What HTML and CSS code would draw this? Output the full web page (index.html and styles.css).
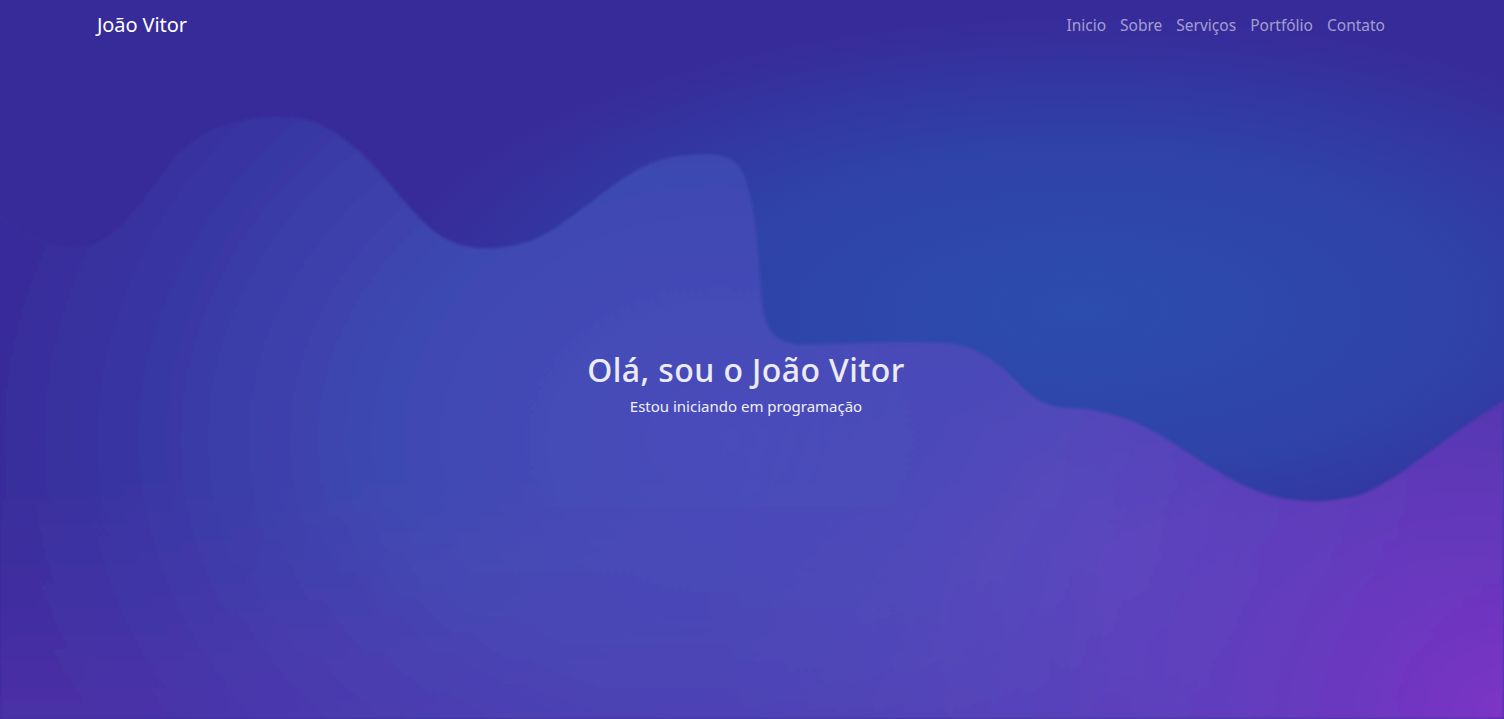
FILE: index.html
```html
<!DOCTYPE html>
<html lang="pt-BR">
<head>
<meta charset="utf-8">
<title>João Vitor</title>
<link rel="stylesheet" href="styles.css">
</head>
<body>
<div class="page">
  <svg class="bg" viewBox="0 0 1504 719" preserveAspectRatio="none" aria-hidden="true">
    <defs>
      <radialGradient id="base" cx="1080" cy="310" r="700" gradientUnits="userSpaceOnUse" gradientTransform="translate(1080 310) scale(1 0.42) translate(-1080 -310)">
        <stop offset="0" stop-color="#2c4cae"/>
        <stop offset="0.55" stop-color="#2f42a8"/>
        <stop offset="1" stop-color="#372b9a"/>
      </radialGradient>
      <radialGradient id="wavefill" cx="720" cy="440" r="720" gradientUnits="userSpaceOnUse" gradientTransform="translate(720 440) scale(1 0.8) translate(-720 -440)">
        <stop offset="0" stop-color="#4a4cbb"/>
        <stop offset="0.45" stop-color="#3e49b2"/>
        <stop offset="0.85" stop-color="#3834a2"/>
        <stop offset="1" stop-color="#382c9b"/>
      </radialGradient>
      <radialGradient id="purple" cx="1504" cy="719" r="640" gradientUnits="userSpaceOnUse">
        <stop offset="0" stop-color="#7c33c6" stop-opacity="1"/>
        <stop offset="0.4" stop-color="#6a3bc0" stop-opacity="0.7"/>
        <stop offset="1" stop-color="#5a44bd" stop-opacity="0"/>
      </radialGradient>
      <radialGradient id="bottomglow" cx="1120" cy="560" r="420" gradientUnits="userSpaceOnUse">
        <stop offset="0" stop-color="#5a4ac0" stop-opacity="0.85"/>
        <stop offset="1" stop-color="#5a4ac0" stop-opacity="0"/>
      </radialGradient>
      <linearGradient id="bottomtint" x1="0" y1="480" x2="0" y2="719" gradientUnits="userSpaceOnUse">
        <stop offset="0" stop-color="#6a36bc" stop-opacity="0"/>
        <stop offset="1" stop-color="#6a36bc" stop-opacity="0.35"/>
      </linearGradient>
      <clipPath id="waveclip">
        <path d="M0,215 C25,232 50,250 77,248 C115,245 140,205 173,160 C205,125 245,117 278,117 C320,117 340,135 360,152 C395,185 420,230 455,243 C475,250 490,249 505,247 C545,242 565,220 590,203 C620,180 645,160 680,156 C710,153 735,150 745,178 C758,215 758,265 762,300 C765,325 770,342 800,345 C840,344 900,340 945,343 C975,345 995,360 1015,380 C1032,398 1045,407 1070,408 C1105,410 1130,418 1160,435 C1200,460 1240,490 1280,498 C1310,503 1335,502 1360,495 C1400,480 1440,440 1504,400 L1504,719 L0,719 Z"/>
      </clipPath>
      <filter id="soft" x="-5%" y="-5%" width="110%" height="110%">
        <feGaussianBlur stdDeviation="1.5"/>
      </filter>
    </defs>
    <rect width="1504" height="719" fill="url(#base)"/>
    <g filter="url(#soft)">
      <g clip-path="url(#waveclip)">
        <rect width="1504" height="719" fill="url(#wavefill)"/>
        <rect width="1504" height="719" fill="url(#bottomtint)"/>
        <rect width="1504" height="719" fill="url(#bottomglow)"/>
        <rect width="1504" height="719" fill="url(#purple)"/>
      </g>
    </g>
  </svg>

  <header class="navbar">
    <a class="brand" href="#">João Vitor</a>
    <nav class="links">
      <a href="#">Inicio</a>
      <a href="#">Sobre</a>
      <a href="#">Serviços</a>
      <a href="#">Portfólio</a>
      <a href="#">Contato</a>
    </nav>
  </header>

  <main class="hero">
    <h1 class="title">Olá, sou o João Vitor</h1>
    <p class="subtitle">Estou iniciando em programação</p>
  </main>
</div>
</body>
</html>
```

FILE: styles.css
```css
* { box-sizing: border-box; }

html, body {
  margin: 0;
  padding: 0;
  height: 100%;
}

body {
  font-family: "Noto Sans", "Open Sans", "Liberation Sans", sans-serif;
  background: #372c9a;
  color: #ffffff;
  overflow: hidden;
}

.page {
  position: relative;
  width: 100%;
  height: 719px;
  display: flex;
  flex-direction: column;
}

.bg {
  position: absolute;
  inset: 0;
  width: 100%;
  height: 100%;
  z-index: 0;
}

.navbar {
  position: relative;
  z-index: 1;
  display: flex;
  justify-content: space-between;
  align-items: center;
  height: 49px;
  padding: 0 112px 0 97px;
}

.brand {
  color: #ffffff;
  text-decoration: none;
  font-size: 20px;
  letter-spacing: -0.1px;
}

.links {
  display: flex;
}

.links a {
  color: rgba(255, 255, 255, 0.55);
  text-decoration: none;
  font-size: 15.5px;
  padding: 0 7px;
  letter-spacing: 0;
}

.hero {
  position: relative;
  z-index: 1;
  flex: 1;
  display: flex;
  flex-direction: column;
  align-items: center;
  padding: 297px 12px 0 0;
}

.title {
  margin: 0;
  font-size: 32px;
  font-weight: 500;
  line-height: 48px;
  color: #ecebf5;
  letter-spacing: 0.4px;
}

.subtitle {
  margin: 0;
  font-size: 15px;
  line-height: 24px;
  color: #f1f0f8;
  letter-spacing: 0;
}
```
